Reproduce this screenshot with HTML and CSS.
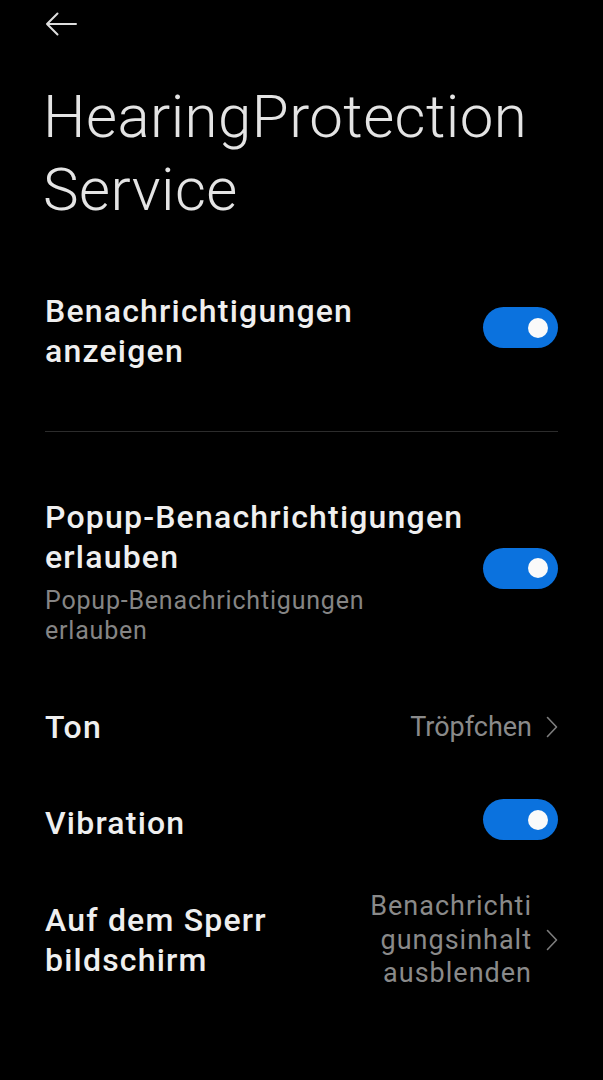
FILE: index.html
```html
<!DOCTYPE html>
<html lang="de">
<head>
    <meta charset="UTF-8">
    <meta name="viewport" content="width=device-width, initial-scale=1.0">
    <title>HearingProtection Service</title>
    <link rel="stylesheet" href="styles.css">
</head>
<body>
    <div class="screen">
        <div class="topbar">
            <svg class="back" width="32" height="24" viewBox="0 0 32 24">
                <path d="M31 12H2M12.5 1.5L2 12l10.5 10.5" fill="none" stroke="#dedede" stroke-width="2" stroke-linecap="round" stroke-linejoin="round"/>
            </svg>
        </div>

        <h1 class="title">HearingProtection<br>Service</h1>

        <div class="row row-first">
            <div class="label">Benachrichtigungen<br>anzeigen</div>
            <div class="switch"><span class="knob"></span></div>
        </div>

        <div class="divider"></div>

        <div class="row row-popup">
            <div>
                <div class="label">Popup-Benachrichtigungen<br>erlauben</div>
                <div class="hint">Popup-Benachrichtigungen<br>erlauben</div>
            </div>
            <div class="switch"><span class="knob"></span></div>
        </div>

        <div class="row">
            <div class="label">Ton</div>
            <div class="value">
                <span>Tröpfchen</span>
                <svg class="chev" width="12" height="22" viewBox="0 0 12 22">
                    <path d="M1.5 1.5L10.5 11l-9 9.5" fill="none" stroke="#7d7d7d" stroke-width="1.6" stroke-linecap="round" stroke-linejoin="round"/>
                </svg>
            </div>
        </div>

        <div class="row">
            <div class="label">Vibration</div>
            <div class="switch"><span class="knob"></span></div>
        </div>

        <div class="row row-last">
            <div class="label">Auf dem Sperr<br>bildschirm</div>
            <div class="value">
                <span class="multi">Benachrichti<br>gungsinhalt<br>ausblenden</span>
                <svg class="chev" width="12" height="22" viewBox="0 0 12 22">
                    <path d="M1.5 1.5L10.5 11l-9 9.5" fill="none" stroke="#7d7d7d" stroke-width="1.6" stroke-linecap="round" stroke-linejoin="round"/>
                </svg>
            </div>
        </div>
    </div>
</body>
</html>
```

FILE: styles.css
```css
* {
    margin: 0;
    padding: 0;
    box-sizing: border-box;
}

body {
    font-family: Roboto, "Noto Sans", sans-serif;
    background-color: #000;
    color: #f0f0f0;
}

.screen {
    width: 603px;
    min-height: 1080px;
    padding: 0 45px;
}

.topbar {
    padding-top: 12px;
    height: 80px;
}
.back {
    display: block;
}

.title {
    margin-left: -2px;
    font-size: 60px;
    font-weight: 300;
    line-height: 73px;
    letter-spacing: 0.45px;
    color: #e4e4e4;
}

.row {
    display: flex;
    justify-content: space-between;
    align-items: center;
    padding: 28px 0;
}
.row-first {
    padding: 65px 0 60px;
}
.row-popup {
    padding: 65px 0 33px;
}
.row-last {
    padding: 19px 0;
}

.label {
    font-size: 32px;
    font-weight: 500;
    line-height: 40px;
    letter-spacing: 1.2px;
    color: #efefef;
}

.hint {
    margin-top: 9px;
    font-size: 25px;
    line-height: 30px;
    letter-spacing: 0.8px;
    color: #858585;
}

.divider {
    height: 1px;
    background-color: #2c2c2c;
}

.switch {
    flex-shrink: 0;
    width: 75px;
    height: 41px;
    margin-top: -7px;
    border-radius: 21px;
    background-color: #0b72de;
    display: flex;
    align-items: center;
    justify-content: flex-end;
    padding-right: 10px;
}
.knob {
    width: 20px;
    height: 20px;
    border-radius: 50%;
    background-color: #fafafa;
}

.value {
    display: flex;
    align-items: center;
    gap: 14px;
    font-size: 27px;
    line-height: 34px;
    color: #8a8a8a;
    text-align: right;
}
.multi {
    line-height: 33.5px;
    letter-spacing: 1px;
}
.chev {
    display: block;
    flex-shrink: 0;
}
```
